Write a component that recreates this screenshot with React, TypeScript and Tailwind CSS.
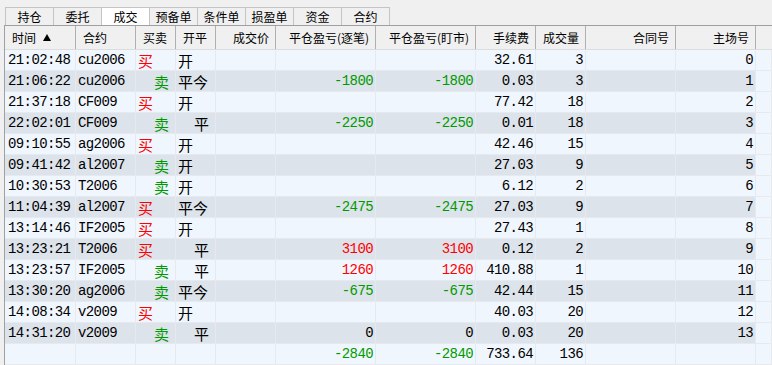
type Side = "buy" | "sell";

type Fill = {
  time: string;
  symbol: string;
  side: Side;
  offset: "开" | "平" | "平今";
  pnlTrade?: number;
  pnlMark?: number;
  fee: string;
  qty: number;
  seq: number;
};

const fills: Fill[] = [
  { time: "21:02:48", symbol: "cu2006", side: "buy", offset: "开", fee: "32.61", qty: 3, seq: 0 },
  { time: "21:06:22", symbol: "cu2006", side: "sell", offset: "平今", pnlTrade: -1800, pnlMark: -1800, fee: "0.03", qty: 3, seq: 1 },
  { time: "21:37:18", symbol: "CF009", side: "buy", offset: "开", fee: "77.42", qty: 18, seq: 2 },
  { time: "22:02:01", symbol: "CF009", side: "sell", offset: "平", pnlTrade: -2250, pnlMark: -2250, fee: "0.01", qty: 18, seq: 3 },
  { time: "09:10:55", symbol: "ag2006", side: "buy", offset: "开", fee: "42.46", qty: 15, seq: 4 },
  { time: "09:41:42", symbol: "al2007", side: "sell", offset: "开", fee: "27.03", qty: 9, seq: 5 },
  { time: "10:30:53", symbol: "T2006", side: "sell", offset: "开", fee: "6.12", qty: 2, seq: 6 },
  { time: "11:04:39", symbol: "al2007", side: "buy", offset: "平今", pnlTrade: -2475, pnlMark: -2475, fee: "27.03", qty: 9, seq: 7 },
  { time: "13:14:46", symbol: "IF2005", side: "buy", offset: "开", fee: "27.43", qty: 1, seq: 8 },
  { time: "13:23:21", symbol: "T2006", side: "buy", offset: "平", pnlTrade: 3100, pnlMark: 3100, fee: "0.12", qty: 2, seq: 9 },
  { time: "13:23:57", symbol: "IF2005", side: "sell", offset: "平", pnlTrade: 1260, pnlMark: 1260, fee: "410.88", qty: 1, seq: 10 },
  { time: "13:30:20", symbol: "ag2006", side: "sell", offset: "平今", pnlTrade: -675, pnlMark: -675, fee: "42.44", qty: 15, seq: 11 },
  { time: "14:08:34", symbol: "v2009", side: "buy", offset: "开", fee: "40.03", qty: 20, seq: 12 },
  { time: "14:31:20", symbol: "v2009", side: "sell", offset: "平", pnlTrade: 0, pnlMark: 0, fee: "0.03", qty: 20, seq: 13 },
];

const tabs = ["持仓", "委托", "成交", "预备单", "条件单", "损盈单", "资金", "合约"];

const headers: { label: string; align: "left" | "right" }[] = [
  { label: "时间", align: "left" },
  { label: "合约", align: "left" },
  { label: "买卖", align: "left" },
  { label: "开平", align: "left" },
  { label: "成交价", align: "right" },
  { label: "平仓盈亏(逐笔)", align: "right" },
  { label: "平仓盈亏(盯市)", align: "right" },
  { label: "手续费", align: "right" },
  { label: "成交量", align: "right" },
  { label: "合同号", align: "right" },
  { label: "主场号", align: "right" },
];

const gridCols =
  "grid grid-cols-[71px_60px_40px_40px_60px_100px_100px_60px_50px_90px_80px_1fr]";
const mono = "font-['Liberation_Mono',monospace] text-[14px] tracking-[-0.6px]";
const cjk = "font-['Noto_Sans_CJK_SC',sans-serif]";

function pnlColor(v: number) {
  if (v < 0) return "text-[#009a00]";
  if (v > 0) return "text-[#ff0000]";
  return "text-black";
}

function Cell({
  children,
  className = "",
}: {
  children?: React.ReactNode;
  className?: string;
}) {
  return (
    <div
      className={`flex h-[21px] items-center overflow-hidden whitespace-pre border-b border-r border-[#e6e9ed] leading-none ${className}`}
    >
      {children}
    </div>
  );
}

function NumCell({ value, color = "text-black", bg }: { value?: string | number; color?: string; bg: string }) {
  return (
    <Cell className={`justify-end pr-[2px] ${mono} ${color} ${bg}`}>
      {value === undefined ? "" : String(value)}
    </Cell>
  );
}

function FillRow({ f, striped }: { f: Fill; striped: boolean }) {
  const bg = striped ? "bg-[#dde3ea]" : "bg-[#f0f6fd]";
  return (
    <div className={gridCols}>
      <Cell className={`pl-[3px] ${mono} text-black ${bg}`}>{f.time}</Cell>
      <Cell className={`pl-[2px] ${mono} text-black ${bg}`}>{f.symbol}</Cell>
      <Cell
        className={`${cjk} text-[15px] ${bg} ${
          f.side === "buy" ? "pl-[2px] text-[#ff0000]" : "pl-[18px] text-[#009a00]"
        }`}
      >
        {f.side === "buy" ? "买" : "卖"}
      </Cell>
      <Cell className={`${cjk} text-[15px] text-black ${bg} ${f.offset === "平" ? "pl-[18px]" : "pl-[2px]"}`}>
        {f.offset}
      </Cell>
      <NumCell bg={bg} />
      <NumCell bg={bg} value={f.pnlTrade} color={pnlColor(f.pnlTrade ?? 0)} />
      <NumCell bg={bg} value={f.pnlMark} color={pnlColor(f.pnlMark ?? 0)} />
      <NumCell bg={bg} value={f.fee} />
      <NumCell bg={bg} value={f.qty} />
      <NumCell bg={bg} />
      <NumCell bg={bg} value={f.seq} />
      <Cell className="bg-[#f0f6fd]" />
    </div>
  );
}

function TotalRow() {
  const bg = "bg-[#f0f6fd]";
  return (
    <div className={gridCols}>
      <Cell className={bg} />
      <Cell className={bg} />
      <Cell className={bg} />
      <Cell className={bg} />
      <NumCell bg={bg} />
      <NumCell bg={bg} value={-2840} color="text-[#009a00]" />
      <NumCell bg={bg} value={-2840} color="text-[#009a00]" />
      <NumCell bg={bg} value="733.64" />
      <NumCell bg={bg} value={136} />
      <NumCell bg={bg} />
      <NumCell bg={bg} />
      <Cell className={bg} />
    </div>
  );
}

export default function App() {
  return (
    <div className={`h-[365px] w-[772px] overflow-hidden bg-[#f0f0f0] ${cjk}`}>
      {/* tab strip */}
      <div className="flex h-[25px] items-end pl-[5px]">
        <div className="flex h-[18px] border-l border-t border-[#c4c4c4]">
          {tabs.map((t) => (
            <div
              key={t}
              className={`flex w-[48px] items-center justify-center border-r border-[#c4c4c4] text-[12px] text-black ${
                t === "成交" ? "bg-white" : "bg-[#f0f0f0]"
              }`}
            >
              {t}
            </div>
          ))}
        </div>
      </div>

      {/* trade grid */}
      <div className="ml-[4px] border-l border-t border-[#a0a0a0]">
        <div className={`${gridCols} h-[24px] border-b border-[#dcdcdc] bg-[#f0f0f0] text-[12px] text-black`}>
          {headers.map((h, i) => (
            <div
              key={h.label}
              className={`flex items-center border-r border-[#b0b0b0] ${
                h.align === "right" ? "justify-end pr-[6px]" : "pl-[7px]"
              }`}
            >
              {h.label}
              {i === 0 && (
                <svg width="8" height="7" viewBox="0 0 8 7" className="ml-[7px]">
                  <path d="M4 0 L8 7 L0 7 Z" fill="#000" />
                </svg>
              )}
            </div>
          ))}
          <div />
        </div>
        {fills.map((f, i) => (
          <FillRow key={f.seq} f={f} striped={i % 2 === 1} />
        ))}
        <TotalRow />
      </div>
    </div>
  );
}
